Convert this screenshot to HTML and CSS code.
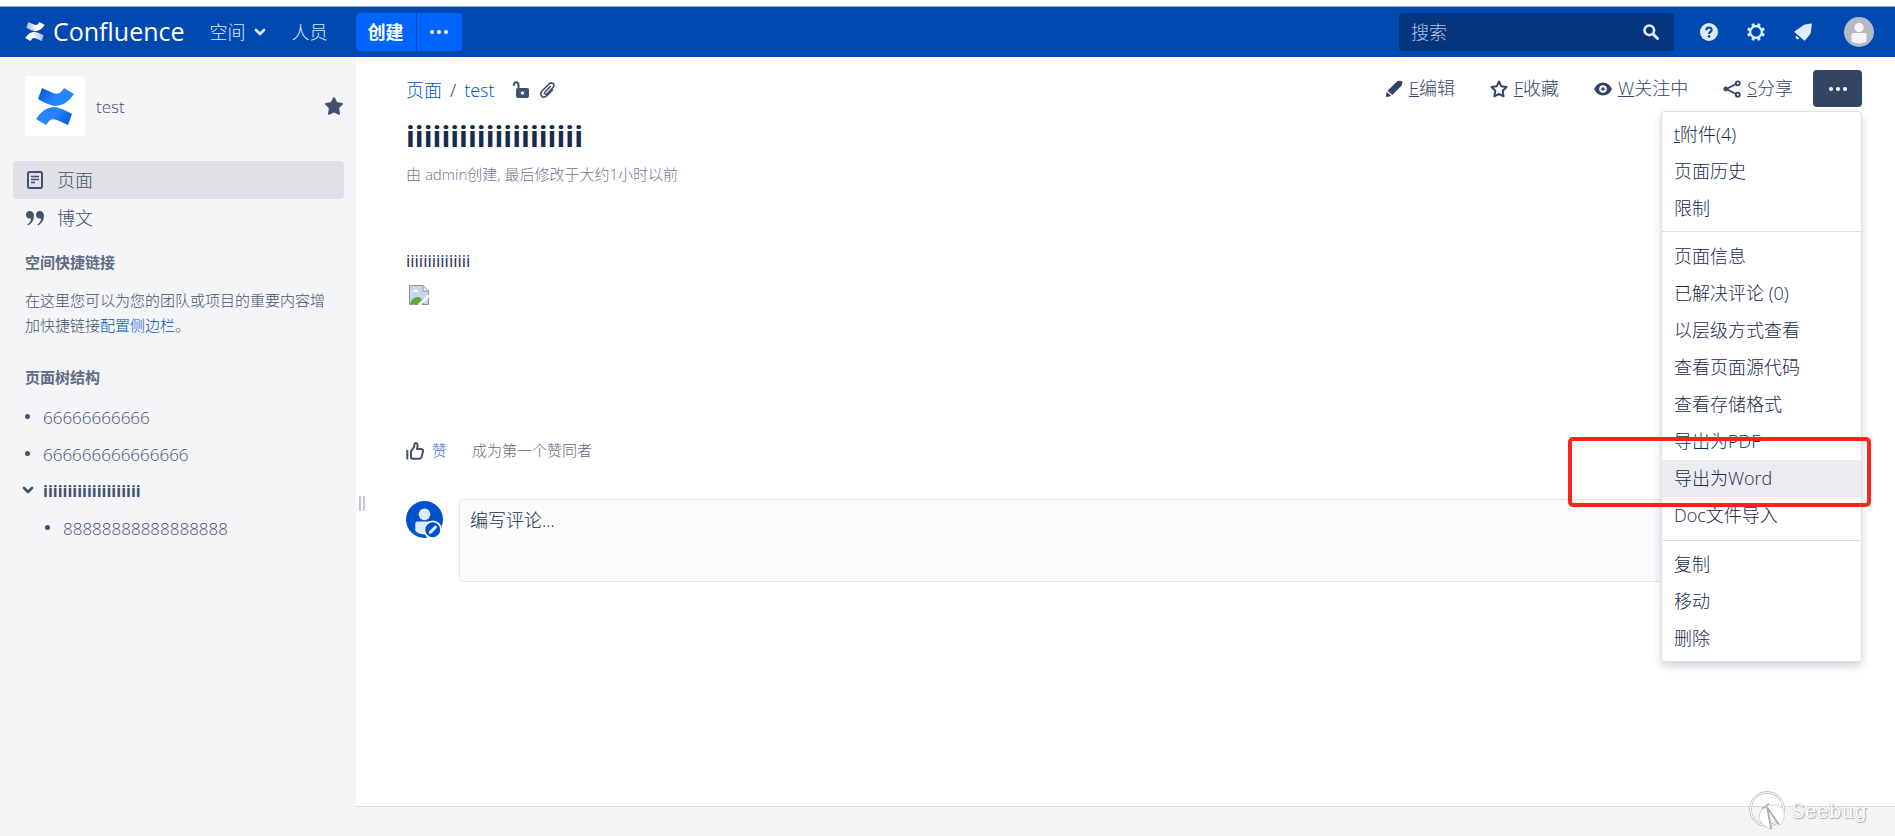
FILE: index.html
```html
<!DOCTYPE html>
<html lang="zh-CN">
<head>
<meta charset="utf-8">
<title>test - Confluence</title>
<link rel="stylesheet" href="styles.css">
</head>
<body>
<header class="topbar">
  <a class="brand" href="#">
    <svg class="brand-mark" viewBox="0 0 38 37" aria-hidden="true">
      <defs><linearGradient id="wa" x1="0" y1="0" x2="1" y2="0"><stop offset="0" stop-color="#9fb9e0"/><stop offset=".6" stop-color="#fff"/></linearGradient>
      <linearGradient id="wb" x1="1" y1="0" x2="0" y2="0"><stop offset="0" stop-color="#9fb9e0"/><stop offset=".6" stop-color="#fff"/></linearGradient></defs>
      <path fill="url(#wa)" d="M6 0 L17 5 Q22 7 25 4 L28 0 L38 6 Q30 18 19 18 Q12 17 2 11Z"/>
      <path fill="url(#wb)" d="M32 37 L21 32 Q15 30 13 33 L10 37 L0 31 Q8 19 18 19 Q26 20 36 26Z"/>
    </svg>
    <span>Confluence</span>
  </a>
  <nav class="topnav">
    <a href="#">空间
      <svg class="chev" viewBox="0 0 12 8" aria-hidden="true"><path d="M2 2l4 4 4-4" fill="none" stroke="currentColor" stroke-width="2.6" stroke-linecap="round" stroke-linejoin="round"/></svg>
    </a>
    <a href="#">人员</a>
  </nav>
  <div class="create-group">
    <button class="create" type="button">创建</button>
    <button class="create-more" type="button" aria-label="更多"><svg class="dots" viewBox="0 0 18 4" aria-hidden="true"><circle cx="2" cy="2" r="2"/><circle cx="9" cy="2" r="2"/><circle cx="16" cy="2" r="2"/></svg></button>
  </div>
  <form class="search">
    <input type="search" placeholder="搜索" aria-label="搜索">
    <svg class="search-icon" viewBox="0 0 16 16" aria-hidden="true"><circle cx="6.3" cy="6.3" r="4.8" fill="none" stroke="currentColor" stroke-width="2.6"/><path d="M10 10l4.5 4.5" stroke="currentColor" stroke-width="3" stroke-linecap="round"/></svg>
  </form>
  <div class="tools">
    <button type="button" aria-label="帮助"><svg class="icon" viewBox="0 0 18 18" aria-hidden="true"><circle cx="9" cy="9" r="9" fill="currentColor"/><path d="M6.3 7.2Q6.3 4.5 9 4.5T11.7 7Q11.7 8.3 10.3 9Q9 9.7 9 11" fill="none" stroke="#0049b0" stroke-width="2"/><circle cx="9" cy="13.4" r="1.3" fill="#0049b0"/></svg></button>
    <button type="button" aria-label="设置"><svg class="icon" viewBox="0 0 18 18" aria-hidden="true"><circle cx="9" cy="9" r="5.8" fill="none" stroke="currentColor" stroke-width="2.2"/><g stroke="currentColor" stroke-width="3"><path d="M6.8 3.6L5.8 .6M11.2 3.6L12.2 .6M6.8 14.4L5.8 17.4M11.2 14.4L12.2 17.4M3.6 6.8L.6 5.8M3.6 11.2L.6 12.2M14.4 6.8L17.4 5.8M14.4 11.2L17.4 12.2"/></g></svg></button>
    <button type="button" aria-label="通知"><svg class="icon" viewBox="0 0 18 18" aria-hidden="true"><path fill="currentColor" d="M17 .6Q18 .5 17.8 1.6L16.8 9.5Q16.5 11 15.5 12L11 17.5Q10.5 18 9.8 17.2L.6 9.3Q0 8.500 1 8L7 4Q9 2.2 11 1.5ZM2 12.5L5.500 15.5Q3.8 17 2.4 15.8Q1 14.3 2 12.5Z"/></svg></button>
    <button class="user" type="button" aria-label="用户菜单"><svg viewBox="0 0 30 30" aria-hidden="true"><circle cx="15" cy="15" r="15" fill="#b3bac5"/><circle cx="15" cy="10.5" r="4.7" fill="#f4f5f7"/><path fill="#f4f5f7" d="M7.5 17.5Q7.5 16 9 16H21Q22.5 16 22.5 17.5V24.500Q20 26.5 15 26.5T7.5 24.500Z"/></svg></button>
  </div>
</header>

<div class="layout">
  <aside class="sidebar">
    <div class="space">
      <a class="space-logo" href="#" aria-label="test">
        <svg viewBox="0 0 38 37" aria-hidden="true">
          <defs><linearGradient id="ba" x1="0" y1="0" x2="1" y2=".4"><stop offset="0" stop-color="#0052cc"/><stop offset=".6" stop-color="#2684ff"/></linearGradient>
          <linearGradient id="bb" x1="1" y1="1" x2="0" y2=".6"><stop offset="0" stop-color="#0052cc"/><stop offset=".6" stop-color="#2684ff"/></linearGradient></defs>
          <path fill="url(#ba)" d="M6 0 L17 5 Q22 7 25 4 L28 0 L38 6 Q30 18 19 18 Q12 17 2 11Z"/>
          <path fill="url(#bb)" d="M32 37 L21 32 Q15 30 13 33 L10 37 L0 31 Q8 19 18 19 Q26 20 36 26Z"/>
        </svg>
      </a>
      <a class="space-name" href="#">test</a>
      <button class="fav" type="button" aria-label="收藏空间"><svg class="icon" viewBox="0 0 18 18" aria-hidden="true"><path d="M9 1.2L11.4 6 17 6.9 13.1 10.8 14 16.8 9 14.4 4 16.8 4.9 10.8 1 6.9 6.6 6Z" fill="currentColor" stroke="currentColor" stroke-width="2" stroke-linejoin="round"/></svg></button>
    </div>
    <nav class="sidenav">
      <a class="current" href="#"><svg class="icon" viewBox="0 0 18 18" aria-hidden="true"><rect x="2" y="1" width="14" height="16" rx="1.5" fill="none" stroke="currentColor" stroke-width="2"/><path d="M5 5.5h8M5 8.5h8M5 11.5h4" stroke="currentColor" stroke-width="1.4"/></svg>页面</a>
      <a href="#"><svg class="icon" viewBox="0 0 18 18" aria-hidden="true"><path fill="currentColor" d="M3.8 2A3.8 3.8 0 1 0 5 9.4Q5 13 1.6 15.2Q1.4 16.5 2.6 16.2Q8 13 8 6.5Q7.5 2 3.8 2ZM13.8 2A3.8 3.8 0 1 0 15 9.4Q15 13 11.6 15.2Q11.4 16.5 12.6 16.2Q18 13 18 6.5Q17.5 2 13.8 2Z"/></svg>博文</a>
    </nav>
    <section class="side-section">
      <h2>空间快捷链接</h2>
      <p>在这里您可以为您的团队或项目的重要内容增加快捷链接<a href="#">配置侧边栏</a>。</p>
    </section>
    <section class="side-section">
      <h2>页面树结构</h2>
      <ul class="tree">
        <li><span class="mark"><i class="bullet"></i></span><a href="#">66666666666</a></li>
        <li><span class="mark"><i class="bullet"></i></span><a href="#">666666666666666</a></li>
        <li><span class="mark"><svg class="chev" viewBox="0 0 12 8" aria-hidden="true"><path d="M2 2l4 4 4-4" fill="none" stroke="currentColor" stroke-width="2.6" stroke-linecap="round" stroke-linejoin="round"/></svg></span><a class="active" href="#">iiiiiiiiiiiiiiiiiiii</a></li>
        <li class="child"><span class="mark"><i class="bullet"></i></span><a href="#">88888888888888888</a></li>
      </ul>
    </section>
  </aside>
  <div class="splitter" aria-hidden="true"><span class="grip"></span></div>

  <div class="page">
    <main class="content">
      <div class="page-head">
        <nav class="crumbs">
          <a href="#">页面</a><span>/</span><a href="#">test</a>
          <button type="button" aria-label="无限制"><svg class="icon" viewBox="0 0 18 18" aria-hidden="true"><rect x="4" y="7" width="13" height="10" rx="2" fill="currentColor"/><circle cx="10.5" cy="12" r="1.7" fill="#fff"/><path d="M6.5 8V4Q6.5 1.3 4.2 1.3T2 4" fill="none" stroke="currentColor" stroke-width="2" stroke-linecap="round"/></svg></button>
          <button type="button" aria-label="附件"><svg class="icon" viewBox="0 0 18 18" aria-hidden="true"><path d="M12.3 5.5L7 11Q6 12.2 7 13T9 12.7L15 6.5Q17 4 15 2.5T11 3L4.5 9.5Q1.5 12.5 3.5 15T9 14.7L14.5 9" fill="none" stroke="currentColor" stroke-width="1.6" stroke-linecap="round"/></svg></button>
        </nav>
        <div class="actions">
          <a href="#"><svg class="icon" viewBox="0 0 18 18" aria-hidden="true"><path fill="currentColor" d="M12 1.5Q13 .6 14 .7L16.5 1Q17.5 1.3 17.4 2.5L17 4.5Q17 5.3 16 6.2L7.3 15 2.5 10.7ZM1.7 11.8L6.2 16 1.6 17Q.8 17 .9 16.2Z"/></svg><span><u>E</u>编辑</span></a>
          <a href="#"><svg class="icon" viewBox="0 0 18 18" aria-hidden="true"><path d="M9 1.5L11.2 6.2 16.5 7 12.7 10.7 13.6 16.3 9 13.8 4.4 16.3 5.3 10.7 1.5 7 6.8 6.2Z" fill="none" stroke="currentColor" stroke-width="2" stroke-linejoin="round"/></svg><span><u>F</u>收藏</span></a>
          <a href="#"><svg class="icon" viewBox="0 0 18 18" aria-hidden="true"><path fill="currentColor" fill-rule="evenodd" d="M9 2.5Q15 2.5 18 9Q15 15.5 9 15.5T0 9Q3 2.5 9 2.5ZM9 5.2A3.8 3.8 0 1 0 9 12.8A3.8 3.8 0 1 0 9 5.2Z"/><circle cx="9" cy="9" r="1.8" fill="currentColor"/></svg><span><u>W</u>关注中</span></a>
          <a href="#"><svg class="icon" viewBox="0 0 18 18" aria-hidden="true"><g fill="none" stroke="currentColor" stroke-width="1.8"><path d="M13 4L3.5 9 13 14"/><circle cx="14.8" cy="3.3" r="2"/><circle cx="14.8" cy="14.7" r="2"/><circle cx="2.8" cy="9" r="1.5"/></g></svg><span><u>S</u>分享</span></a>
          <div class="more">
            <button class="more-btn" type="button" aria-label="更多操作" aria-expanded="true"><svg class="dots" viewBox="0 0 18 4" aria-hidden="true"><circle cx="2" cy="2" r="2"/><circle cx="9" cy="2" r="2"/><circle cx="16" cy="2" r="2"/></svg></button>
            <div class="menu">
              <ul>
                <li><a href="#"><u>t</u>附件(4)</a></li>
                <li><a href="#">页面历史</a></li>
                <li><a href="#">限制</a></li>
              </ul>
              <ul class="menu-tools">
                <li><a href="#">页面信息</a></li>
                <li><a href="#">已解决评论 (0)</a></li>
                <li><a href="#">以层级方式查看</a></li>
                <li><a href="#">查看页面源代码</a></li>
                <li><a href="#">查看存储格式</a></li>
                <li><a href="#">导出为PDF</a></li>
                <li class="marked"><a href="#">导出为Word</a></li>
                <li><a href="#">Doc文件导入</a></li>
              </ul>
              <ul>
                <li><a href="#">复制</a></li>
                <li><a href="#">移动</a></li>
                <li><a href="#">删除</a></li>
              </ul>
            </div>
          </div>
        </div>
      </div>
      <h1>iiiiiiiiiiiiiiiiiiii</h1>
      <p class="byline">由 admin创建, 最后修改于大约1小时以前</p>
      <div class="body">
        <p>iiiiiiiiiiiiiii</p>
        <svg class="broken" viewBox="0 0 20 20" role="img" aria-label="图片"><path fill="#c4d6f6" d="M1 1H14L19 6V19H1Z"/><path fill="#fff" d="M14 1L19 6H14ZM3.5 7Q3.5 5.5 5 5.5Q6 3.5 7.5 4.5Q9.5 5 9.5 7Z"/><path fill="#5aac33" d="M1 19Q3 12 9 12Q14 13 15 19Z"/><path fill="none" stroke="#939393" d="M.5 .5H14L19.5 6V19.5H.5ZM14 .5V6H19.5"/><path d="M10 20L20 10.5" stroke="#fff" stroke-width="3"/></svg>
      </div>
      <div class="likes">
        <button type="button"><svg class="icon" viewBox="0 0 18 18" aria-hidden="true"><path d="M1.3 8V17.5" stroke="currentColor" stroke-width="2"/><path d="M5 9.500L8 5 8.5 2Q9 .8 10.3 1.2Q12 2 11.5 4.5L11 7H15.5Q17.5 7.5 17 9.5L15.5 15Q15 16.7 13.5 16.7H7Q5 16.7 5 15Z" fill="none" stroke="currentColor" stroke-width="2" stroke-linejoin="round"/></svg>赞</button>
        <span>成为第一个赞同者</span>
      </div>
      <form class="comment">
        <svg class="avatar" viewBox="0 0 36 36" aria-hidden="true"><circle cx="18" cy="18" r="18" fill="#0052cc"/><circle cx="18" cy="13" r="5.7" fill="#deebff"/><path fill="#deebff" d="M9 22Q9 20 11 20H25Q27 20 27 22V29Q24 32.500 18 32.5T9 29Z"/><circle cx="26" cy="28" r="9" fill="#fff"/><circle cx="26" cy="28" r="7.3" fill="#0052cc"/><path fill="#deebff" d="M28.5 23.7L30.5 25.6 25 31.3 22 32 22.8 29Z"/></svg>
        <textarea rows="3" placeholder="编写评论..." aria-label="编写评论"></textarea>
      </form>
    </main>
    <footer class="footer"></footer>
  </div>
</div>

<div class="watermark">
  <svg viewBox="0 0 38 40" aria-hidden="true"><circle cx="18" cy="18" r="16.5" fill="none" stroke="#b4b4b4" stroke-width="2.4"/><circle cx="18" cy="18" r="16.5" fill="none" stroke="#fff" stroke-width="1.2"/><path d="M10 26Q11 17 20 14.500Q32 12 35 20Q36 30 31.500 34L29.500 33.500L18.500 17L23 38Q12 36 10 26Z" fill="#fff" stroke="#bbb" stroke-width=".6"/><path d="M13 17.500Q17 16 20 12.500M18 16L22 38M18.500 17L30 33.500" fill="none" stroke="#aaa" stroke-width="1.5"/></svg>
  <span>Seebug</span>
</div>
</body>
</html>
```

FILE: styles.css
```css
* { box-sizing: border-box; }

body {
  margin: 0;
  min-height: 100vh;
  display: flex;
  flex-direction: column;
  position: relative;
  background: #fff;
  color: #172b4d;
  font: 300 17px/25px "Open Sans", "Noto Sans CJK SC", sans-serif;
}

a { color: #0052cc; text-decoration: none; }
button { font: inherit; border: 0; padding: 0; background: none; color: inherit; cursor: pointer; }
ul { list-style: none; margin: 0; padding: 0; }
h1, h2, p { margin: 0; }
svg { display: block; flex: none; }

.icon { width: 18px; height: 18px; }
.chev { width: 12px; height: 8px; }
.dots { width: 18px; height: 4px; fill: currentColor; }

/* Top bar */
.topbar {
  display: flex;
  align-items: center;
  height: 51px;
  margin-top: 6px;
  padding: 0 21px 0 25px;
  border-top: 1px solid #a5adba;
  background: #0049b0;
  color: #deebff;
}
.topbar a { color: inherit; }
.brand { display: flex; align-items: center; gap: 8px; padding-bottom: 2px; font-size: 25px; font-weight: 400; }
.topbar .brand { color: #fff; }
.brand-mark { width: 20px; height: 19px; }
.topnav { display: flex; gap: 26px; margin-left: 25px; font-size: 18px; }
.topnav a { display: flex; align-items: center; gap: 8px; }
.create-group { display: flex; gap: 1px; margin-left: 28px; color: #fff; }
.create-group button { height: 38px; background: #0065ff; display: grid; place-items: center; }
.create-group .create { width: 60px; border-radius: 4px 0 0 4px; font-size: 18px; font-weight: 700; }
.create-group .create-more { width: 45px; border-radius: 0 4px 4px 0; }
.search { display: flex; align-items: center; width: 275px; height: 38px; margin-left: auto; padding: 0 15px 0 12px; border-radius: 4px; background: #05357c; }
.search input { flex: 1; min-width: 0; padding: 0; border: 0; outline: 0; background: none; color: inherit; font: inherit; font-size: 18px; }
.search input::placeholder { color: #b3c5e3; opacity: 1; }
.search-icon { width: 16px; height: 16px; }
.tools { display: flex; align-items: center; gap: 29px; margin-left: 26px; }
.tools .user { margin-left: 3px; }
.user svg { width: 30px; height: 30px; }

/* Columns */
.layout { flex: 1; display: flex; }

/* Sidebar */
.sidebar { width: 356px; padding: 19px 12px 0 13px; background: #f4f5f7; color: #42526e; }
.sidebar a { color: inherit; }
.space { display: flex; align-items: center; gap: 11px; padding: 0 1px 0 12px; }
.space-logo { display: grid; place-items: center; width: 60px; height: 60px; border-radius: 4px; background: #fff; }
.space-logo svg { width: 38px; height: 37px; }
.fav { margin-left: auto; }
.sidenav { margin-top: 25px; font-size: 18px; }
.sidenav a { display: flex; align-items: center; gap: 13px; height: 38px; padding-left: 13px; border-radius: 4px; }
.sidenav .current { background: #dfe1e5; }
.side-section { padding: 13px 12px 0; font-size: 15px; }
.side-section + .side-section { padding-top: 27px; }
.side-section h2 { margin-bottom: 13px; color: #5e6c84; font-size: 15px; font-weight: 600; }
.side-section + .side-section h2 { margin-bottom: 9px; }
.side-section p { width: 300px; }
.sidebar p a { color: #0052cc; }
.tree { font-size: 17px; }
.tree li { display: flex; align-items: center; height: 37px; }
.tree .mark { width: 18px; padding-bottom: 3px; }
.tree .child { padding-left: 20px; }
.tree .chev { margin-left: -3px; }
.bullet { display: block; width: 5px; height: 5px; border-radius: 50%; background: #42526e; }
.tree .active { font-size: 16px; font-weight: 700; }

.splitter { display: flex; align-items: center; width: 10px; padding: 114px 0 0 3px; }
.grip { width: 6px; height: 15px; border: solid #c1c7d0; border-width: 0 2px; }

/* Page */
.page { flex: 1; min-width: 0; display: flex; flex-direction: column; }
.content { flex: 1; padding: 13px 33px 40px 40px; }
.page-head { display: flex; justify-content: space-between; font-size: 18px; }
.crumbs { display: flex; align-items: center; height: 40px; gap: 8px; }
.crumbs button { color: #42526e; }
.crumbs a + button { margin-left: 10px; }
.actions { display: flex; align-items: center; gap: 35px; height: 37px; color: #344563; }
.actions > a { display: flex; align-items: center; gap: 6px; color: inherit; }
.actions > .more { margin-left: -15px; }
.more { position: relative; }
.more-btn { display: grid; place-items: center; width: 49px; height: 37px; border-radius: 4px; background: #344563; color: #fff; }

.menu {
  position: absolute;
  z-index: 2;
  top: calc(100% + 4px);
  right: 0;
  width: 201px;
  padding: 4px 0;
  border: 1px solid #dfe1e6;
  border-radius: 4px;
  background: #fff;
  box-shadow: 0 4px 8px rgba(9, 30, 66, .2);
}
.menu-tools { margin: 4px 0; padding: 6px 0; border: solid #dcdee3; border-width: 1px 0; }
.menu ul:last-child { padding-top: 1px; }
.menu a { display: block; padding: 6px 12px; color: #172b4d; }
.marked { position: relative; background: #ebecf0; }
.marked::after {
  content: "";
  position: absolute;
  inset: -23px -10px -10px -94px;
  border: 4px solid #ff2416;
  border-radius: 5px;
  pointer-events: none;
}

h1 { margin-top: 8px; font-size: 29px; line-height: 35px; font-weight: 700; }
.byline { margin-top: 9px; color: #6b778c; font-size: 15px; }
.body { margin-top: 61px; font-weight: 400; }
.broken { width: 20px; height: 20px; margin: 12px 0 0 3px; }
.likes { display: flex; align-items: center; gap: 25px; margin-top: 133px; color: #5e6c84; font-size: 15px; }
.likes button { display: flex; align-items: center; gap: 8px; color: #3b6cc7; }
.likes .icon { color: #42526e; }
.comment { display: flex; gap: 16px; margin-top: 36px; }
.avatar { width: 37px; height: 37px; margin-top: 2px; }
.comment textarea {
  display: block;
  flex: 1;
  height: 83px;
  padding: 8px 10px;
  border: 1px solid #e4e6ea;
  border-radius: 4px;
  background: #fafbfc;
  font: inherit;
  font-size: 18px;
  resize: none;
}
.comment textarea::placeholder { color: #172b4d; opacity: 1; }

.footer { height: 30px; margin-left: -10px; border-top: 1px solid #d8dae2; background: #f4f4f4; }

.watermark {
  position: absolute;
  right: 28px;
  bottom: 5px;
  display: flex;
  align-items: center;
  gap: 4px;
  color: #fff;
  font: 400 20px/30px "DejaVu Serif", serif;
  text-shadow: 1px 1px 1px #aaa, 0 0 1px #aaa;
}
.watermark svg { width: 38px; height: 40px; }
```
